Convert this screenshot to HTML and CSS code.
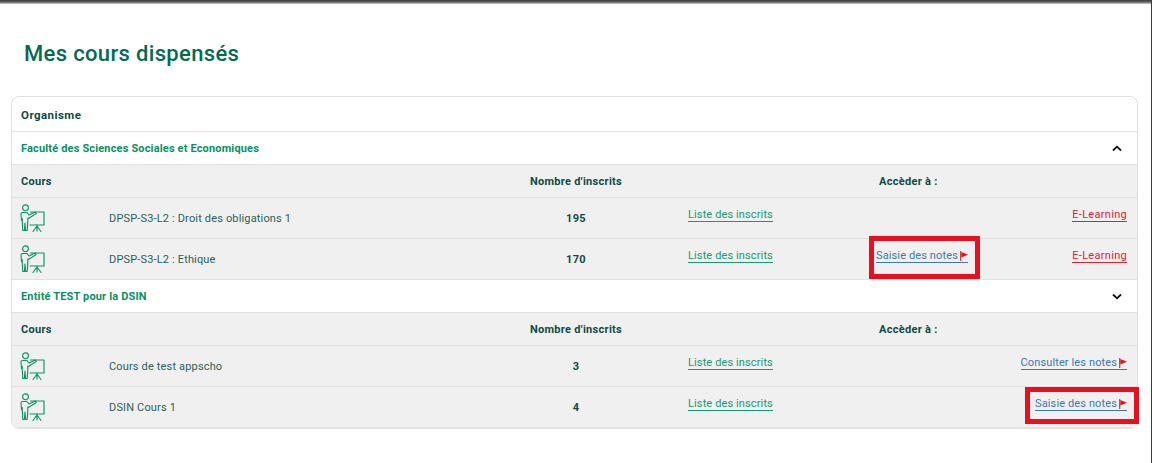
FILE: index.html
```html
<!DOCTYPE html>
<html lang="fr">
<head>
<meta charset="utf-8">
<title>Mes cours dispensés</title>
<link rel="stylesheet" href="styles.css">
</head>
<body>
<svg width="0" height="0" class="defs" aria-hidden="true">
  <symbol id="teach" viewBox="0 0 25 28">
    <g fill="none" stroke="currentColor" stroke-width="1.150" stroke-linejoin="round" stroke-linecap="round">
      <circle cx="5.500" cy="3.800" r="2.900"/>
      <path d="M1 10q0-1.500 1.500-1.500H7l2 2.500 6.500-3 .7 1.600L8.500 14.500 7.800 14V18l-.6 8.500H5.600L5 19l-.6 7.500H2.800L2.300 18v-3.500L1.500 16.500z"/>
      <path d="M10.500 8H24V21H10"/>
      <path d="M17 21v6M17 22l-4 5.500M17 22l4 5.500"/>
    </g>
  </symbol>
  <symbol id="flag" viewBox="0 0 8 10">
    <rect x="0" y="0" width="1.300" height="10" fill="#d9413a"/>
    <path d="M1.300 1 8 3.800 1.300 6.500z" fill="#e8101f"/>
  </symbol>
</svg>
<div class="topbar"></div>
<main class="page">
  <h1 class="title">Mes cours dispensés</h1>
  <section class="card">
    <div class="org">Organisme</div>

    <div class="group"><span>Faculté des Sciences Sociales et Economiques</span><svg class="chev" viewBox="0 0 10 7"><path d="M1 5.500 5 1.700 9 5.500" /></svg></div>
    <div class="row head">
      <div class="c-name">Cours</div>
      <div class="c-num">Nombre d'inscrits</div>
      <div class="c-access">Accèder à :</div>
    </div>
    <div class="row">
      <div class="c-icon"><svg class="teach"><use href="#teach"/></svg></div>
      <div class="c-label">DPSP-S3-L2 : Droit des obligations 1</div>
      <div class="c-num strong">195</div>
      <div class="c-list"><a class="lnk green">Liste des inscrits</a></div>
      <div class="c-mid"></div>
      <div class="c-end"><a class="lnk red">E-Learning</a></div>
    </div>
    <div class="row">
      <div class="c-icon"><svg class="teach"><use href="#teach"/></svg></div>
      <div class="c-label">DPSP-S3-L2 : Ethique</div>
      <div class="c-num strong">170</div>
      <div class="c-list"><a class="lnk green">Liste des inscrits</a></div>
      <div class="c-mid"><a class="lnk blue">Saisie des notes<svg class="flag"><use href="#flag"/></svg></a></div>
      <div class="c-end"><a class="lnk red">E-Learning</a></div>
    </div>

    <div class="group"><span>Entité TEST pour la DSIN</span><svg class="chev" viewBox="0 0 10 7"><path d="M1 1.500 5 5.300 9 1.500" /></svg></div>
    <div class="row head">
      <div class="c-name">Cours</div>
      <div class="c-num">Nombre d'inscrits</div>
      <div class="c-access">Accèder à :</div>
    </div>
    <div class="row">
      <div class="c-icon"><svg class="teach"><use href="#teach"/></svg></div>
      <div class="c-label">Cours de test appscho</div>
      <div class="c-num strong">3</div>
      <div class="c-list"><a class="lnk green">Liste des inscrits</a></div>
      <div class="c-mid"></div>
      <div class="c-end"><a class="lnk blue">Consulter les notes<svg class="flag"><use href="#flag"/></svg></a></div>
    </div>
    <div class="row">
      <div class="c-icon"><svg class="teach"><use href="#teach"/></svg></div>
      <div class="c-label">DSIN Cours 1</div>
      <div class="c-num strong">4</div>
      <div class="c-list"><a class="lnk green">Liste des inscrits</a></div>
      <div class="c-mid"></div>
      <div class="c-end"><a class="lnk blue">Saisie des notes<svg class="flag"><use href="#flag"/></svg></a></div>
    </div>
  </section>
</main>
<div class="mark mark-a"></div>
<div class="mark mark-b"></div>
<div class="edge"></div>
</body>
</html>
```
FILE: styles.css
```css
* { box-sizing: border-box; }
html, body { margin: 0; height: 463px; overflow: hidden; background: #fff; }
body { font-family: Roboto, "Liberation Sans", sans-serif; font-size: 11px; color: #1e5a50; position: relative; }
.defs { position: absolute; }
.topbar { height: 4px; background: linear-gradient(#3c3c3c, #5e5e5e 50%, #d8d8d8); }
.page { padding: 0 14px 0 11px; }
.title { margin: 37px 0 0 13px; height: 55px; font-size: 22px; line-height: 26px; font-weight: 500; letter-spacing: .34px; color: #056a50; }
.card { border: 1px solid #e0e0e0; border-radius: 8px; overflow: hidden; background: #fff; height: 333px; }
.org { height: 35px; padding: 1px 0 0 9px; display: flex; align-items: center; font-weight: 700; font-size: 11.500px; letter-spacing: .45px; color: #0f4a44; border-bottom: 1px solid #e2e2e2; }
.group { height: 33px; padding: 0 15px 0 9px; display: flex; align-items: center; justify-content: space-between; font-weight: 700; font-size: 11px; letter-spacing: .16px; color: #089063; border-bottom: 1px solid #e2e2e2; }
.chev { width: 10px; height: 7px; fill: none; stroke: #111; stroke-width: 1.800; }
.row { display: grid; grid-template-columns: 97px 367px 200px 189px 135px 137px; align-items: center; background: #f0f0f0; height: 41px; border-bottom: 1px solid #e2e2e2; }
.row.head { height: 33px; font-weight: 700; color: #0f4a44; letter-spacing: .3px; }
.c-name { grid-column: 1 / 3; padding-left: 9px; }
.c-num { grid-column: 3; text-align: center; }
.c-access { grid-column: 4 / 6; padding-left: 203px; white-space: nowrap; }
.c-icon { padding-left: 8px; height: 28px; color: #0f9468; }
.teach { width: 25px; height: 28px; display: block; }
.c-label { letter-spacing: .16px; color: #2d5f58; }
.strong { font-weight: 700; color: #0f4a44; letter-spacing: .4px; }
.c-list { padding-left: 12px; }
.c-mid { padding-left: 11px; }
.c-end { padding-right: 10px; text-align: right; }
.c-list, .c-mid, .c-end { padding-bottom: 6px; white-space: nowrap; }
.lnk { display: inline-block; line-height: 13px; letter-spacing: .12px; border-bottom: 1px solid currentColor; }
.green { color: #18996f; }
.red { color: #e3202c; letter-spacing: .3px; }
.blue { color: #3f78ad; }
.flag { width: 8px; height: 10px; margin-left: 2px; vertical-align: -2px; }
.mark { position: absolute; border: 5px solid #e8101f; }
.mark-a { left: 869px; top: 236px; width: 111px; height: 43px; }
.mark-b { left: 1025px; top: 387px; width: 114px; height: 37px; }
.edge { position: absolute; right: 0; top: 0; width: 1px; height: 463px; background: #1d4a44; }
```
